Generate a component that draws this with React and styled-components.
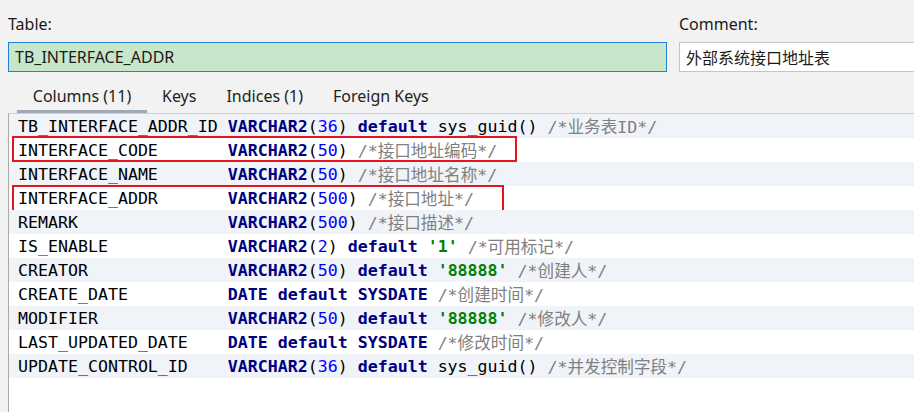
import React from 'react';
import styled, { createGlobalStyle } from 'styled-components';

const GlobalStyle = createGlobalStyle`
  html, body {
    margin: 0;
    padding: 0;
    background: #f2f2f2;
  }
  body {
    width: 914px;
    height: 412px;
    overflow: hidden;
  }
`;

const Page = styled.div`
  width: 914px;
  height: 412px;
  overflow: hidden;
  display: flex;
  flex-direction: column;
  padding-left: 8px;
  box-sizing: border-box;
  font-family: "Noto Sans", "Noto Sans CJK SC", sans-serif;
  font-size: 16px;
  color: #1a1a1a;
`;

const Header = styled.div`
  display: flex;
  gap: 12px;
  padding-top: 13px;
`;

const Field = styled.div`
  display: flex;
  flex-direction: column;
  gap: 6px;
  width: ${(props) => props.$width}px;
  flex-shrink: 0;
`;

const Label = styled.label`
  line-height: 23px;
  height: 23px;
`;

const Input = styled.div`
  height: 30px;
  box-sizing: border-box;
  display: flex;
  align-items: center;
  padding-left: 6px;
  border: 1px solid ${(props) => (props.$focused ? '#1e83d6' : '#c4c4c4')};
  background: ${(props) => (props.$focused ? '#c8e6c9' : '#ffffff')};
  white-space: nowrap;
`;

const Tabs = styled.div`
  display: flex;
  margin-left: 9px;
  margin-top: 9px;
  height: 32px;
`;

const Tab = styled.div`
  padding: 0 15px;
  min-width: ${(props) => props.$min || 0}px;
  display: flex;
  align-items: center;
  justify-content: center;
  box-sizing: border-box;
  border-bottom: 3px solid ${(props) => (props.$active ? '#a2a9b6' : 'transparent')};
  color: #222;
`;

const Panel = styled.div`
  flex: 1;
  background: #ffffff;
  border-left: 1px solid #a9a9a9;
  border-top: 1px solid #cfcfcf;
  font-family: "DejaVu Sans Mono", "Noto Sans CJK SC", monospace;
  font-size: 16.6px;
  color: #000;
`;

const Row = styled.div`
  position: relative;
  height: 24px;
  display: flex;
  align-items: center;
  padding-left: 9px;
  white-space: pre;
  background: ${(props) => (props.$striped ? '#f0f3f8' : '#ffffff')};
`;

const Name = styled.span`
  width: 21ch;
  flex-shrink: 0;
`;

const Token = styled.span`
  color: ${(props) =>
    ({ kw: '#000080', num: '#0000ff', str: '#008000', cm: '#808080' }[props.$kind] || '#000')};
  font-weight: ${(props) => (props.$kind === 'kw' || props.$kind === 'str' ? 700 : 400)};
`;

const Highlight = styled.div`
  position: absolute;
  left: 3px;
  border: 2px solid #e5141f;
  box-sizing: border-box;
  pointer-events: none;
`;

const kw = (t) => ['kw', t];
const num = (t) => ['num', t];
const str = (t) => ['str', t];
const cm = (t) => ['cm', t];
const p = (t) => ['', t];

const varchar = (n) => [kw('VARCHAR2'), p('('), num(n), p(')')];

const columns = [
  { name: 'TB_INTERFACE_ADDR_ID', tokens: [...varchar('36'), p(' '), kw('default'), p(' sys_guid() '), cm('/*业务表ID*/')] },
  { name: 'INTERFACE_CODE', tokens: [...varchar('50'), p(' '), cm('/*接口地址编码*/')], box: { top: -2, width: 505, height: 26 } },
  { name: 'INTERFACE_NAME', tokens: [...varchar('50'), p(' '), cm('/*接口地址名称*/')] },
  { name: 'INTERFACE_ADDR', tokens: [...varchar('500'), p(' '), cm('/*接口地址*/')], box: { top: -1, width: 492, height: 29 } },
  { name: 'REMARK', tokens: [...varchar('500'), p(' '), cm('/*接口描述*/')] },
  { name: 'IS_ENABLE', tokens: [...varchar('2'), p(' '), kw('default'), p(' '), str("'1'"), p(' '), cm('/*可用标记*/')] },
  { name: 'CREATOR', tokens: [...varchar('50'), p(' '), kw('default'), p(' '), str("'88888'"), p(' '), cm('/*创建人*/')] },
  { name: 'CREATE_DATE', tokens: [kw('DATE'), p(' '), kw('default'), p(' '), kw('SYSDATE'), p(' '), cm('/*创建时间*/')] },
  { name: 'MODIFIER', tokens: [...varchar('50'), p(' '), kw('default'), p(' '), str("'88888'"), p(' '), cm('/*修改人*/')] },
  { name: 'LAST_UPDATED_DATE', tokens: [kw('DATE'), p(' '), kw('default'), p(' '), kw('SYSDATE'), p(' '), cm('/*修改时间*/')] },
  { name: 'UPDATE_CONTROL_ID', tokens: [...varchar('36'), p(' '), kw('default'), p(' sys_guid() '), cm('/*并发控制字段*/')] },
];

const tabs = [
  { label: 'Columns (11)', min: 130 },
  { label: 'Keys' },
  { label: 'Indices (1)' },
  { label: 'Foreign Keys' },
];

export default function App() {
  return (
    <>
      <GlobalStyle />
      <Page>
        <Header>
          <Field $width={659}>
            <Label>Table:</Label>
            <Input $focused>TB_INTERFACE_ADDR</Input>
          </Field>
          <Field $width={300}>
            <Label>Comment:</Label>
            <Input>外部系统接口地址表</Input>
          </Field>
        </Header>
        <Tabs>
          {tabs.map((t, i) => (
            <Tab key={t.label} $active={i === 0} $min={t.min}>{t.label}</Tab>
          ))}
        </Tabs>
        <Panel>
          {columns.map((c, i) => (
            <Row key={c.name} $striped={i % 2 === 0}>
              <Name>{c.name}</Name>
              {c.tokens.map(([kind, text], j) => (
                <Token key={j} $kind={kind}>{text}</Token>
              ))}
              {c.box && (
                <Highlight style={{ top: c.box.top, width: c.box.width, height: c.box.height }} />
              )}
            </Row>
          ))}
        </Panel>
      </Page>
    </>
  );
}
